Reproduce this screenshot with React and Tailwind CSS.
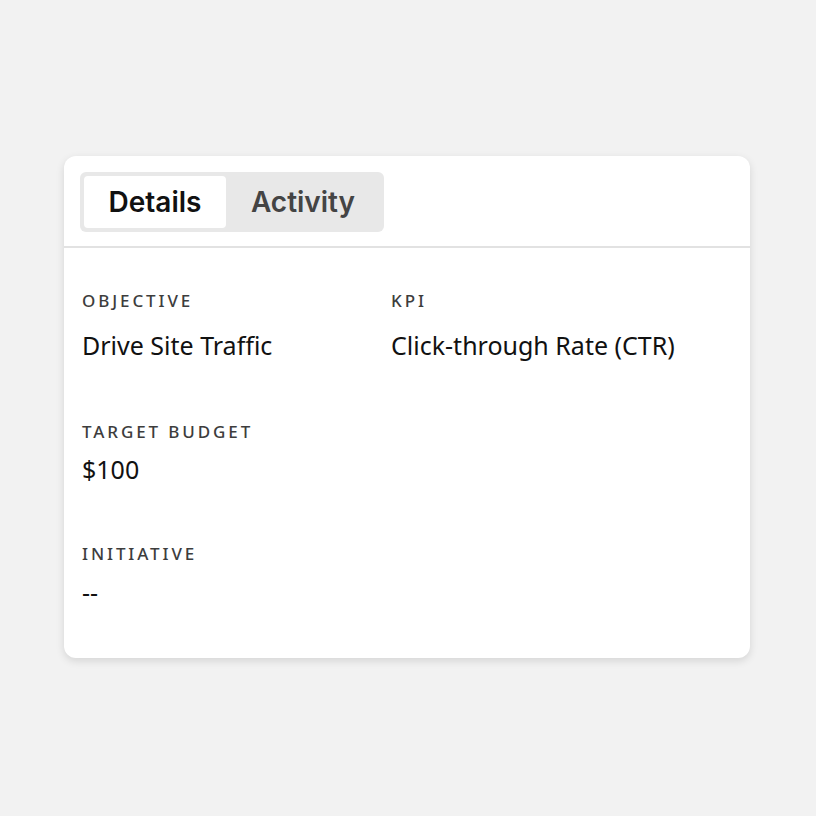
export default function App() {
  const label = "text-[17px] font-medium tracking-[0.17em] text-[#3d3d3d] leading-none";
  const value = "text-[25px] text-[#111] leading-none";
  return (
    <div className="w-[816px] h-[816px] bg-[#f2f2f2] pt-[156px] pl-[64px]" style={{ fontFamily: '"Noto Sans", sans-serif' }}>
      <div className="w-[686px] h-[502px] bg-white rounded-[12px] shadow-[0_3px_8px_rgba(0,0,0,0.12)] overflow-hidden">
        <div className="px-[16px] pt-[16px] pb-[14px] border-b-2 border-[#e2e2e2]">
          <div className="inline-flex bg-[#e8e8e8] rounded-[6px] p-[4px] h-[60px]" style={{ fontFamily: 'Inter, sans-serif' }}>
            <div className="w-[142px] bg-white rounded-[4px] flex items-center justify-center text-[28px] font-semibold text-[#111]">Details</div>
            <div className="w-[154px] flex items-center justify-center text-[28px] font-semibold text-[#444]">Activity</div>
          </div>
        </div>
        <div className="pl-[18px] pt-[44px]">
          <div className="grid grid-cols-[309px_1fr]">
            <div>
              <div className={label}>OBJECTIVE</div>
              <div className={value + " mt-[24px]"}>Drive Site Traffic</div>
            </div>
            <div>
              <div className={label}>KPI</div>
              <div className={value + " mt-[24px]"}>Click-through Rate (CTR)</div>
            </div>
          </div>
          <div className="mt-[65px]">
            <div className={label}>TARGET BUDGET</div>
            <div className={value + " mt-[17px]"}>$100</div>
          </div>
          <div className="mt-[63px]">
            <div className={label}>INITIATIVE</div>
            <div className={value + " mt-[18px]"}>--</div>
          </div>
        </div>
      </div>
    </div>
  );
}
